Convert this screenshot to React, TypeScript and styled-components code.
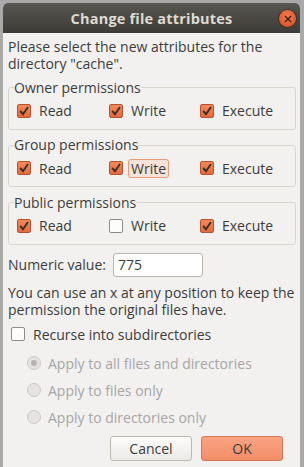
import styled, { createGlobalStyle } from 'styled-components';

const Global = createGlobalStyle`
    html, body {
        margin: 0;
        padding: 0;
        background: #a9a9a7;
    }
    body {
        font-family: "Open Sans", "DejaVu Sans", sans-serif;
        font-size: 14px;
        color: #3c3c3c;
    }
`;

const Screen = styled.div`
    width: 304px;
    height: 467px;
    overflow: hidden;
    padding: 3px 4px 0 3px;
    box-sizing: border-box;
    background: #a9a9a7;
`;

const Window = styled.div`
    height: 100%;
    background: #f2f1f0;
    border-radius: 5px 5px 0 0;
    overflow: hidden;
    display: flex;
    flex-direction: column;
`;

const TitleBar = styled.div`
    height: 30px;
    flex-shrink: 0;
    display: flex;
    align-items: center;
    justify-content: center;
    position: relative;
    background: linear-gradient(#57564f, #3c3b37);
    color: #dfdbd2;
    font-weight: bold;
    font-size: 14.5px;
    letter-spacing: 0.2px;
`;

const CloseButton = styled.div`
    position: absolute;
    right: 4px;
    top: 7px;
    width: 17px;
    height: 17px;
    border-radius: 50%;
    background: radial-gradient(circle at 50% 35%, #f27a4f, #d9481e);
    box-shadow: 0 0 0 1px #3a2e28;
    display: flex;
    align-items: center;
    justify-content: center;
`;

const Body = styled.div`
    padding: 5px 4px 0 5px;
    display: flex;
    flex-direction: column;
`;

const Paragraph = styled.p<{ $gap?: number }>`
    margin: ${(p) => p.$gap ?? 0}px 0 0 0;
    line-height: 17px;
`;

const Frame = styled.fieldset`
    margin: 7.5px 0 0 0;
    padding: 0 0 3px 8px;
    border: 1px solid #d8d5cf;
    border-radius: 3px;
    display: grid;
    grid-template-columns: 92px 91px 1fr;
    min-width: 0;
`;

const Legend = styled.legend`
    padding: 0;
    margin-left: -3px;
    line-height: 16px;
`;

const Check = styled.label<{ $disabled?: boolean; $h?: number }>`
    display: flex;
    align-items: center;
    gap: 8px;
    height: ${(p) => p.$h ?? 30}px;
    color: ${(p) => (p.$disabled ? '#a7a6a4' : '#3c3c3c')};
`;

const Box = styled.span<{ $on: boolean }>`
    width: 14px;
    height: 14px;
    border-radius: 2px;
    box-sizing: border-box;
    border: 1px solid ${(p) => (p.$on ? '#b4532e' : '#8f8d89')};
    background: ${(p) => (p.$on ? 'linear-gradient(#f3895a, #e56a3c)' : '#fdfdfc')};
    display: flex;
    align-items: center;
    justify-content: center;
    flex-shrink: 0;
`;

const Focus = styled.span<{ $focus?: boolean }>`
    padding: 0 2px;
    margin: 0 -3px;
    line-height: 17px;
    border-radius: 3px;
    border: 1px solid ${(p) => (p.$focus ? '#ec9a76' : 'transparent')};
    background: ${(p) => (p.$focus ? '#f5e2d8' : 'transparent')};
`;

const NumericRow = styled.div`
    display: flex;
    align-items: center;
    gap: 7px;
    margin-top: 8px;
    height: 24px;
`;

const Input = styled.div`
    width: 90px;
    height: 24px;
    box-sizing: border-box;
    border: 1px solid #b9b6b0;
    border-radius: 3px;
    background: #ffffff;
    padding-left: 4px;
    display: flex;
    align-items: center;
`;

const RecurseRow = styled(Check)`
    margin: 4px 0 0 3px;
`;

const RadioList = styled.div`
    display: flex;
    flex-direction: column;
    margin-top: 3.5px;
    padding-left: 19px;
    gap: 0;
`;

const Radio = styled.span<{ $on?: boolean }>`
    width: 14px;
    height: 14px;
    border-radius: 50%;
    box-sizing: border-box;
    border: 1px solid #cac8c4;
    background: #e4e3e1;
    display: flex;
    align-items: center;
    justify-content: center;
    margin-right: -1px;
    &::after {
        content: '';
        width: 6px;
        height: 6px;
        border-radius: 50%;
        background: ${(p) => (p.$on ? '#b6b4b1' : 'transparent')};
    }
`;

const Buttons = styled.div`
    display: flex;
    justify-content: flex-end;
    gap: 9px;
    margin-top: 5.5px;
    padding-right: 13px;
`;

const Button = styled.div<{ $primary?: boolean }>`
    width: 82px;
    height: 25px;
    box-sizing: border-box;
    border-radius: 3px;
    display: flex;
    align-items: center;
    justify-content: center;
    border: 1px solid ${(p) => (p.$primary ? '#d57656' : '#bdbab4')};
    background: ${(p) => (p.$primary ? 'linear-gradient(#f9a383, #f38e67)' : 'linear-gradient(#fcfcfb, #ebe9e6)')};
    color: #3c3c3c;
`;

const Tick = () => (
    <svg width="12" height="12" viewBox="0 0 12 12">
        <path d="M2.2 6 L5 9.2 L10 2" fill="none" stroke="#3b2e28" strokeWidth="1.9" />
    </svg>
);

const Cb = ({ on, label, focus }: { on: boolean; label: string; focus?: boolean }) => (
    <Check>
        <Box $on={on}>{on && <Tick />}</Box>
        <Focus $focus={focus}>{label}</Focus>
    </Check>
);

const groups = [
    { title: 'Owner permissions', v: [true, true, true] },
    { title: 'Group permissions', v: [true, true, true], focus: 1 },
    { title: 'Public permissions', v: [true, false, true] },
];

const radios = ['Apply to all files and directories', 'Apply to files only', 'Apply to directories only'];

const App = () => (
    <Screen>
        <Global />
        <Window>
            <TitleBar>
                Change file attributes
                <CloseButton>
                    <svg width="8" height="8" viewBox="0 0 8 8">
                        <path d="M1 1 L7 7 M7 1 L1 7" stroke="#3a1f14" strokeWidth="1.4" />
                    </svg>
                </CloseButton>
            </TitleBar>
            <Body>
                <Paragraph>Please select the new attributes for the directory "cache".</Paragraph>
                {groups.map((g) => (
                    <Frame key={g.title}>
                        <Legend>{g.title}</Legend>
                        {['Read', 'Write', 'Execute'].map((name, i) => (
                            <Cb key={name} on={g.v[i]} label={name} focus={g.focus === i} />
                        ))}
                    </Frame>
                ))}
                <NumericRow>
                    Numeric value:
                    <Input>775</Input>
                </NumericRow>
                <Paragraph $gap={7.5}>
                    You can use an x at any position to keep the permission the original files have.
                </Paragraph>
                <RecurseRow $h={24}>
                    <Box $on={false} />
                    Recurse into subdirectories
                </RecurseRow>
                <RadioList>
                    {radios.map((r, i) => (
                        <Check key={r} $disabled $h={27}>
                            <Radio $on={i === 0} />
                            {r}
                        </Check>
                    ))}
                </RadioList>
                <Buttons>
                    <Button>Cancel</Button>
                    <Button $primary>OK</Button>
                </Buttons>
            </Body>
        </Window>
    </Screen>
);

export default App;
